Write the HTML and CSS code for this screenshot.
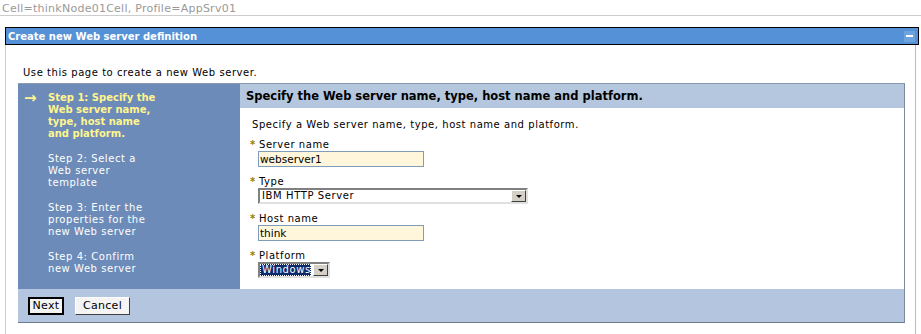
FILE: index.html
```html
<!DOCTYPE html>
<html>
<head>
<meta charset="utf-8">
<link rel="stylesheet" href="styles.css">
</head>
<body>
<div class="crumb">Cell=thinkNode01Cell, Profile=AppSrv01</div>
<div class="portlet">
  <div class="portlet-head">
    <span class="portlet-title">Create new Web server definition</span>
    <span class="min-btn"><span class="dash"></span></span>
  </div>
  <div class="portlet-body">
    <p class="intro">Use this page to create a new Web server.</p>
    <div class="wizard">
      <div class="steps">
        <div class="step current"><span class="arrow">&rarr;</span><span class="step-text">Step 1: Specify the Web server name, type, host name and platform.</span></div>
        <div class="step"><span class="step-text">Step 2: Select a Web server template</span></div>
        <div class="step"><span class="step-text">Step 3: Enter the properties for the new Web server</span></div>
        <div class="step"><span class="step-text">Step 4: Confirm new Web server</span></div>
      </div>
      <div class="main">
        <div class="main-head">Specify the Web server name, type, host name and platform.</div>
        <div class="main-body">
          <p class="lead">Specify a Web server name, type, host name and platform.</p>
          <div class="field">
            <div class="label"><span class="req">*</span>Server name</div>
            <div class="input">webserver1</div>
          </div>
          <div class="field">
            <div class="label"><span class="req">*</span>Type</div>
            <div class="select wide"><span class="sel-val">IBM HTTP Server</span><span class="sel-btn"><span class="tri"></span></span></div>
          </div>
          <div class="field">
            <div class="label"><span class="req">*</span>Host name</div>
            <div class="input">think</div>
          </div>
          <div class="field">
            <div class="label"><span class="req">*</span>Platform</div>
            <div class="select narrow"><span class="sel-val selected">Windows</span><span class="sel-btn"><span class="tri"></span></span></div>
          </div>
        </div>
      </div>
      <div class="buttons">
        <span class="btn default">Next</span>
        <span class="btn cancel">Cancel</span>
      </div>
    </div>
  </div>
</div>
</body>
</html>
```
FILE: styles.css
```css
html, body {
  margin: 0;
  padding: 0;
  background: #fff;
}
body {
  font-family: "DejaVu Sans", Verdana, sans-serif;
  font-size: 10px;
  letter-spacing: 0.55px;
  color: #000;
  width: 921px;
  height: 334px;
  overflow: hidden;
}
.crumb {
  color: #999;
  font-size: 11px;
  letter-spacing: 0.25px;
  line-height: 13px;
  padding: 2px 2px 0 2px;
  height: 13px;
  border-bottom: 1px solid #ccc;
}
.portlet {
  margin: 11px 2px 0 5px;
}
.portlet-head {
  height: 16px;
  background: #5591d6;
  border: 1px solid #000;
  display: flex;
  align-items: center;
  justify-content: space-between;
  padding: 0 2px 0 2px;
}
.portlet-title {
  color: #fff;
  font-weight: bold;
  font-size: 10px;
  letter-spacing: 0;
}
.min-btn {
  width: 11px;
  height: 11px;
  background: #6fa3df;
  display: flex;
  align-items: center;
  justify-content: center;
  margin-right: 1px;
}
.dash {
  width: 7px;
  height: 2px;
  background: #fff;
}
.portlet-body {
  margin-right: 3px;
  border-left: 1px solid #ccc;
  border-right: 1px solid #bbb;
  padding: 21px 10px 20px 12px;
}
.intro {
  margin: 0 0 4px 5px;
  line-height: 13px;
}
.wizard {
  display: grid;
  grid-template-columns: 222px 1fr;
  border-top: 1px solid #8a99ad;
  border-right: 1px solid #7d8a9c;
  border-bottom: 1px solid #6b7a8f;
}
.steps {
  background: #6c8bb8;
  padding: 8px 0 0 6px;
}
.step {
  display: flex;
  line-height: 12px;
  margin-bottom: 13px;
  color: #fff;
}
.step:last-child {
  margin-bottom: 0;
}
.step-text {
  margin-left: 24px;
  width: 112px;
}
.step.current {
  color: #fff58e;
  font-weight: bold;
  letter-spacing: 0;
}
.step.current .arrow {
  width: 24px;
  font-size: 15px;
  line-height: 12px;
  font-weight: bold;
}
.step.current .step-text {
  margin-left: 0;
}
.main {
  display: flex;
  flex-direction: column;
}
.main-head {
  background: #b5c6df;
  font-weight: bold;
  font-size: 11.5px;
  letter-spacing: 0;
  height: 24px;
  line-height: 25px;
  padding-left: 6px;
}
.main-body {
  flex: 1;
  background: #fff;
  padding: 11px 0 2px 8px;
}
.lead {
  margin: 0 0 8px 4px;
  line-height: 12px;
}
.field {
  margin-bottom: 9px;
}
.label {
  line-height: 12px;
  display: flex;
}
.req {
  color: #8f8000;
  font-weight: bold;
  width: 11px;
  padding-left: 2px;
  box-sizing: border-box;
}
.input {
  margin-left: 10px;
  width: 163px;
  height: 14px;
  line-height: 14px;
  border: 1px solid #7f9db9;
  background: #fff6dc;
  padding-left: 1px;
  box-sizing: content-box;
  font-size: 10.5px;
  letter-spacing: 0;
}
.select {
  margin-left: 10px;
  height: 12px;
  display: flex;
  border: 2px solid;
  border-color: #808080 #e0e0e0 #e0e0e0 #808080;
  background: #fff;
  align-items: stretch;
  letter-spacing: 0.6px;
}
.select.wide { width: 266px; }
.select.narrow { width: 68px; }
.sel-val {
  flex: 1;
  line-height: 12px;
  padding-left: 2px;
}
.sel-val.selected {
  background: #0b2a6b;
  color: #fff;
  outline: 1px dotted #fff;
  outline-offset: -1px;
}
.sel-btn {
  width: 13px;
  background: #d4d0c8;
  border: 1px solid;
  border-color: #fff #404040 #404040 #fff;
  display: flex;
  align-items: center;
  justify-content: center;
  margin-left: 2px;
}
.tri {
  width: 0;
  height: 0;
  border-left: 3px solid transparent;
  border-right: 3px solid transparent;
  border-top: 3px solid #000;
}
.buttons {
  grid-column: 1 / 3;
  background: #b4c5df;
  height: 33px;
  display: flex;
  align-items: center;
  padding-left: 10px;
  gap: 11px;
}
.btn {
  font-size: 11px;
  letter-spacing: 0.3px;
  height: 14px;
  line-height: 14px;
  background: #f4f4f4;
  text-align: center;
}
.btn.default {
  width: 32px;
  border: 2px solid #000;
}
.btn.cancel {
  width: 53px;
  border: 1px solid;
  border-color: #fff #404040 #404040 #fff;
  padding: 1px 0;
}
```
